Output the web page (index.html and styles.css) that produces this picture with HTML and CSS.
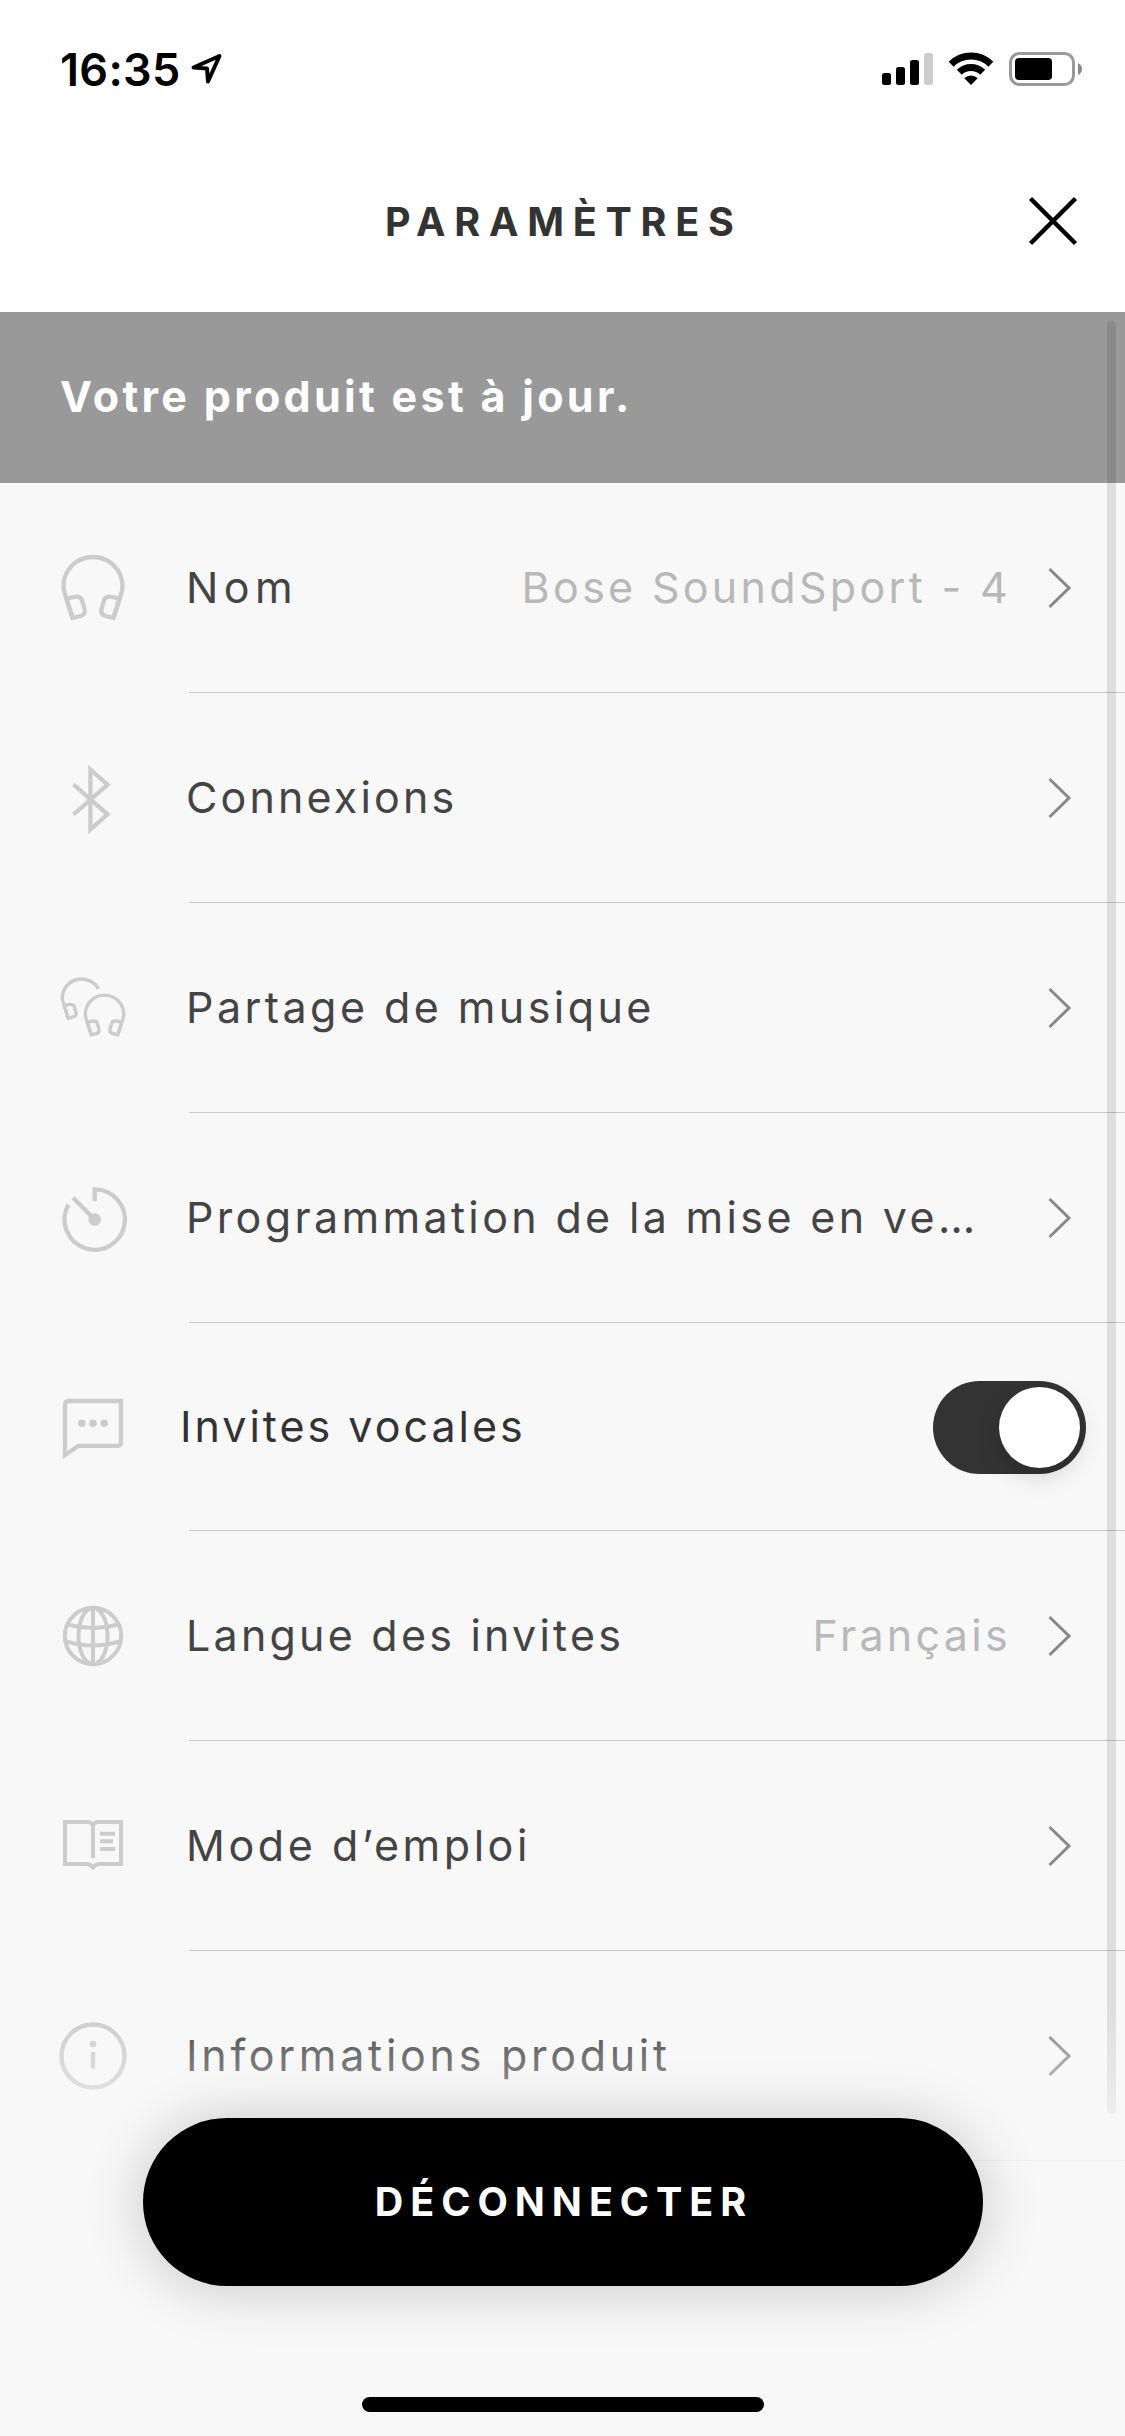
FILE: index.html
```html
<!DOCTYPE html>
<html lang="fr">
<head>
<meta charset="utf-8">
<title>Paramètres</title>
<link rel="stylesheet" href="styles.css">
</head>
<body>
<svg class="defs" width="0" height="0" aria-hidden="true">
  <defs>
    <g id="cans">
      <path d="M-20.500 30 L-28.400 5 Q-29.500 1 -29.500 -2 A29.500 29 0 0 1 29.500 -2 Q29.500 1 28.400 5 L20.500 30"/>
    </g>
    <g id="cup">
      <path d="M-26.500 10.500 L-18.500 8.800 Q-12 8 -10.800 13 L-8.300 22 Q-7.800 26.800 -12.500 28 L-20.500 30 Z"/>
    </g>
    <path id="chevron" d="M1.500 2 L21 21 L1.500 40"/>
  </defs>
</svg>
<div class="screen">
  <div class="status">
    <span class="time">16:35</span>
    <svg class="location" width="32" height="32" viewBox="0 0 32 32"><path d="M2.500 14.500 L28.500 3 L17 28.500 L16 15.500 Z"/></svg>
    <div class="indicators">
      <svg class="signal" width="51" height="34" viewBox="0 0 51 34"><rect x="0" y="21" width="9" height="12" rx="2.500"/><rect x="14" y="15" width="9" height="18" rx="2.500"/><rect x="28" y="8" width="9" height="25" rx="2.500"/><rect class="dim" x="42" y="1" width="9" height="32" rx="2.500"/></svg>
      <svg class="wifi" width="46" height="34" viewBox="0 0 46 34"><path d="M3.200 12.200 A28.200 28.200 0 0 1 42.800 12.200"/><path d="M11.300 20.300 A16.800 16.800 0 0 1 34.700 20.300"/><path class="solid" d="M23 33 L16.300 26.200 A9.600 9.600 0 0 1 29.700 26.200 Z"/></svg>
      <svg class="battery" width="74" height="34" viewBox="0 0 74 34"><rect class="case" x="1.500" y="1.500" width="63" height="31" rx="9"/><rect x="6" y="6" width="37" height="22" rx="4"/><path class="tip" d="M69 11 Q73 13 73 17 Q73 21 69 23 Z"/></svg>
    </div>
  </div>

  <header class="header">
    <h1 class="title">PARAMÈTRES</h1>
    <svg class="close" width="50" height="50" viewBox="0 0 50 50"><path d="M2.500 2.500 L47.500 47.500 M47.500 2.500 L2.500 47.500"/></svg>
  </header>

  <main class="content">
    <div class="banner">Votre produit est à jour.</div>
    <ul class="list">
      <li class="row">
        <svg class="icon" viewBox="-48 -48 96 96"><use href="#cans"/><use href="#cup"/><use href="#cup" transform="scale(-1 1)"/></svg>
        <div class="cell"><span class="label nom">Nom</span><span class="value">Bose SoundSport - 4</span><svg class="chevron" viewBox="0 0 24 42"><use href="#chevron"/></svg></div>
      </li>
      <li class="row">
        <svg class="icon" viewBox="-48 -48 96 96"><path d="M-19.500 -13.500 L14.500 16.300 L-2.600 31.500 V-28.500 L14.500 -13.300 L-19.500 16.500"/></svg>
        <div class="cell"><span class="label connexions">Connexions</span><svg class="chevron" viewBox="0 0 24 42"><use href="#chevron"/></svg></div>
      </li>
      <li class="row">
        <svg class="icon pair" viewBox="-48 -48 96 96"><g transform="translate(11.500 7.300) scale(.65)"><use href="#cans"/><use href="#cup"/><use href="#cup" transform="scale(-1 1)"/></g><g transform="translate(-11.500 -9.300) scale(.65)"><path d="M-20.500 30 L-28.400 5 Q-29.500 1 -29.500 -2 A29.500 29 0 0 1 26 -15"/><use href="#cup"/></g></svg>
        <div class="cell"><span class="label partage">Partage de musique</span><svg class="chevron" viewBox="0 0 24 42"><use href="#chevron"/></svg></div>
      </li>
      <li class="row">
        <svg class="icon" viewBox="-48 -48 96 96"><path d="M1.700 -17 V-28.700 A30.200 30.200 0 1 1 -24.600 -13.300 M-20 -20.300 L1.700 1.500"/><circle class="fill" cx="1.700" cy="1.500" r="6.300"/></svg>
        <div class="cell"><span class="label">Programmation de la mise en ve…</span><svg class="chevron" viewBox="0 0 24 42"><use href="#chevron"/></svg></div>
      </li>
      <li class="row voice">
        <svg class="icon" viewBox="-48 -48 96 96"><path d="M-28 28 V-22 Q-28 -26 -24 -26 H28 V15 Q28 18.800 24.500 18.800 H-14.500 Z"/><g class="fill"><circle cx="-11.200" cy="-3.700" r="3.800"/><circle cx="0" cy="-3.700" r="3.800"/><circle cx="11.200" cy="-3.700" r="3.800"/></g></svg>
        <div class="cell"><span class="label vocales">Invites vocales</span><span class="toggle"><span class="knob"></span></span></div>
      </li>
      <li class="row">
        <svg class="icon fine" viewBox="-48 -48 96 96"><circle r="28.200"/><ellipse rx="14.500" ry="28"/><path d="M0 -28 V28 M-25.500 -11.500 Q0 -4.500 25.500 -11.500 M-26.500 5.500 Q0 13.500 26.500 5.500"/></svg>
        <div class="cell"><span class="label langue">Langue des invites</span><span class="value">Français</span><svg class="chevron" viewBox="0 0 24 42"><use href="#chevron"/></svg></div>
      </li>
      <li class="row">
        <svg class="icon fine" viewBox="-48 -48 96 96"><path d="M0 12 V-20.500 Q-2 -24 -5 -24 H-28 V18 H-6 Q-3 18 0 21.500 Q3 18 6 18 H28 V-24 H5 Q2 -24 0 -20.500 M7 -12.300 H22 M7 -4.700 H20 M7 3 H22"/></svg>
        <div class="cell"><span class="label mode">Mode d’emploi</span><svg class="chevron" viewBox="0 0 24 42"><use href="#chevron"/></svg></div>
      </li>
      <li class="row">
        <svg class="icon" viewBox="-48 -48 96 96"><circle r="31.500"/><path d="M0 -4 V12.500"/><circle class="fill" cy="-12" r="3.300"/></svg>
        <div class="cell"><span class="label infos">Informations produit</span><svg class="chevron" viewBox="0 0 24 42"><use href="#chevron"/></svg></div>
      </li>
    </ul>
    <div class="scrollbar"></div>
  </main>

  <div class="dock">
    <button class="disconnect" type="button">DÉCONNECTER</button>
    <div class="home"></div>
  </div>
</div>
</body>
</html>
```
FILE: styles.css
```css
* {
  box-sizing: border-box;
}

body {
  margin: 0;
  background: #f8f8f8;
  font-family: Inter, "Liberation Sans", sans-serif;
}

.defs {
  position: absolute;
}

.screen {
  position: relative;
  display: flex;
  flex-direction: column;
  width: 1125px;
  height: 2436px;
  overflow: hidden;
}

/* Status bar */
.status {
  display: flex;
  flex: none;
  align-items: center;
  height: 138px;
  padding: 0 42px 0 60px;
  background: #fff;
}

.time {
  width: 131px;
  font-size: 45px;
  font-weight: 600;
  letter-spacing: 0.3px;
}

.location {
  fill: none;
  stroke: #000;
  stroke-width: 4;
  stroke-linejoin: round;
}

.indicators {
  display: flex;
  gap: 15px;
  margin-left: auto;
}

.signal .dim {
  fill: #ccc;
}

.wifi {
  fill: none;
  stroke: #000;
  stroke-width: 7;
}

.wifi .solid {
  fill: #000;
  stroke: none;
}

.battery .case {
  fill: none;
  stroke: #999;
  stroke-width: 3;
}

.battery .tip {
  fill: #8a8a8a;
}

/* Header */
.header {
  display: flex;
  flex: none;
  align-items: center;
  justify-content: space-between;
  height: 174px;
  padding: 0 47px 8px 385px;
  background: #fff;
}

.title {
  margin: 0;
  padding-top: 2px;
  color: #333;
  font-size: 39.5px;
  font-weight: 700;
  letter-spacing: 8.74px;
}

.close {
  fill: none;
  stroke: #000;
  stroke-width: 4.5;
}

/* Settings list */
.content {
  position: relative;
  flex: none;
}

.banner {
  display: flex;
  align-items: center;
  height: 171px;
  padding: 0 60px 4px;
  background: #999;
  color: #fff;
  font-size: 43px;
  font-weight: 700;
  letter-spacing: 3.31px;
}

.list {
  margin: 0;
  padding: 0;
  list-style: none;
}

.row {
  display: flex;
  height: 210px;
  padding-left: 45px;
}

.icon {
  flex: none;
  align-self: center;
  width: 96px;
  height: 96px;
  margin-right: 48px;
  fill: none;
  stroke: #ccc;
  stroke-width: 4.3;
}

.icon.fine {
  stroke-width: 4;
}

.icon.pair {
  stroke-width: 5.2;
}

.icon .fill {
  fill: #ccc;
  stroke: none;
}

.cell {
  display: flex;
  flex: 1;
  align-items: center;
  padding: 1px 53px 0 0;
  border-bottom: 1px solid #c8c8c8;
}

.label {
  margin-left: -3px;
  padding-bottom: 2px;
  color: #444;
  font-size: 43px;
  letter-spacing: 3.34px;
  white-space: nowrap;
}

.label.nom { letter-spacing: 5.4px; }
.label.connexions { letter-spacing: 3.15px; }
.label.partage { letter-spacing: 3.44px; }
.label.langue { letter-spacing: 3.22px; }
.label.mode { letter-spacing: 3.56px; }
.label.infos { letter-spacing: 3.72px; }

.value {
  margin: 0 37px 0 auto;
  padding-bottom: 2px;
  color: #b8b8b8;
  font-size: 43px;
  letter-spacing: 3.3px;
}

.chevron {
  flex: none;
  width: 24px;
  height: 42px;
  fill: none;
  stroke: #888;
  stroke-width: 3;
}

.label + .chevron {
  margin-left: auto;
}

.voice {
  height: 208px;
}

.voice .cell {
  padding-right: 39px;
}

.label.vocales {
  margin-left: -9px;
  color: #333;
  letter-spacing: 2.99px;
}

.toggle {
  display: flex;
  justify-content: flex-end;
  width: 153px;
  height: 93px;
  margin-left: auto;
  padding: 6px;
  border-radius: 47px;
  background: #333;
}

.knob {
  width: 81px;
  height: 81px;
  border-radius: 50%;
  background: #fff;
  box-shadow: 0 9px 24px rgba(0, 0, 0, 0.15);
}

.scrollbar {
  position: absolute;
  top: 9px;
  right: 9px;
  width: 9px;
  height: 1793px;
  border-radius: 4.5px;
  background: rgba(0, 0, 0, 0.1);
}

/* Bottom action, fading the list out beneath it */
.dock {
  position: absolute;
  right: 0;
  bottom: 0;
  left: 0;
  display: flex;
  flex-direction: column;
  align-items: center;
  justify-content: space-between;
  height: 426px;
  padding: 108px 0 24px;
  background: linear-gradient(rgba(248, 248, 248, 0), #f8f8f8 185px);
}

.disconnect {
  width: 840px;
  height: 168px;
  padding: 0 0 0 3px;
  border: 0;
  border-radius: 84px;
  background: #000;
  box-shadow: 0 2px 60px rgba(0, 0, 0, 0.2);
  color: #fff;
  font-family: inherit;
  font-size: 39.5px;
  font-weight: 700;
  letter-spacing: 6.95px;
}

.home {
  width: 402px;
  height: 15px;
  border-radius: 8px;
  background: #000;
}
```
